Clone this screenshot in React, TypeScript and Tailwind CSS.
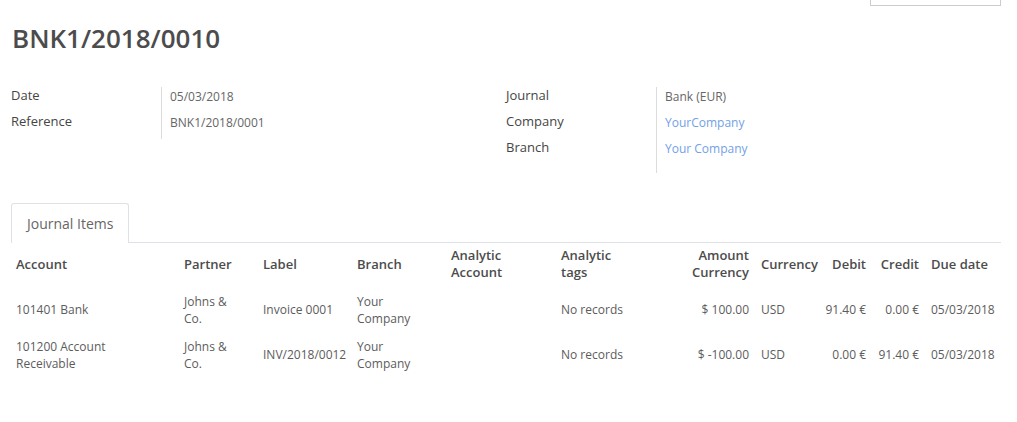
const cols =
  "grid grid-cols-[168px_79px_94px_94px_110px_100px_98px_65px_52px_53px_77px]";

type Row = {
  account: string[];
  partner: string[];
  label: string[];
  branch: string[];
  tags: string;
  amount: string;
  currency: string;
  debit: string;
  credit: string;
  due: string;
};

const rows: Row[] = [
  {
    account: ["101401 Bank"],
    partner: ["Johns &", "Co."],
    label: ["Invoice 0001"],
    branch: ["Your", "Company"],
    tags: "No records",
    amount: "$ 100.00",
    currency: "USD",
    debit: "91.40 €",
    credit: "0.00 €",
    due: "05/03/2018",
  },
  {
    account: ["101200 Account", "Receivable"],
    partner: ["Johns &", "Co."],
    label: ["INV/2018/0012"],
    branch: ["Your", "Company"],
    tags: "No records",
    amount: "$ -100.00",
    currency: "USD",
    debit: "0.00 €",
    credit: "91.40 €",
    due: "05/03/2018",
  },
];

const Lines = ({ lines }: { lines: string[] }) => (
  <div>
    {lines.map((l) => (
      <div key={l} className="whitespace-nowrap">
        {l}
      </div>
    ))}
  </div>
);

const Field = ({ label, value, link }: { label: string; value: string; link?: boolean }) => (
  <div className="flex h-[26px]">
    <div className="w-[150px] shrink-0 text-[13px] font-medium leading-[16px] text-[#454545]">
      {label}
    </div>
    <div
      className={
        "border-l border-[#dcdcdc] pl-[8px] text-[12px] leading-[20px] " +
        (link ? "text-[#739fe8]" : "text-[#666666]")
      }
    >
      {value}
    </div>
  </div>
);

export default function App() {
  return (
    <div
      className="min-h-screen bg-white pl-[11px] pr-[16px]"
      style={{ fontFamily: '"Open Sans", "Noto Sans", sans-serif' }}
    >
      <div className="flex justify-end">
        <div className="h-[6px] w-[131px] border-x border-b border-[#cccccc] bg-white" />
      </div>

      <h1 className="mt-[16px] pl-[1px] text-[26px] font-semibold leading-[32px] text-[#4c4c4c]">
        BNK1/2018/0010
      </h1>

      <div className="mt-[33px] grid grid-cols-2">
        <div className="flex flex-col">
          <Field label="Date" value="05/03/2018" />
          <Field label="Reference" value="BNK1/2018/0001" />
        </div>
        <div className="flex flex-col">
          <Field label="Journal" value="Bank (EUR)" />
          <Field label="Company" value="YourCompany" link />
          <Field label="Branch" value="Your Company" link />
          <div className="flex h-[8px]">
            <div className="w-[150px] shrink-0" />
            <div className="border-l border-[#dcdcdc]" />
          </div>
        </div>
      </div>

      <div className="mt-[30px] flex border-b border-[#dee2e6]">
        <div className="-mb-px flex h-[40px] items-center rounded-t-[3px] border-x border-t border-[#dee2e6] bg-white px-[15px] text-[14px] text-[#666666]">
          Journal Items
        </div>
      </div>

      <div className={cols + " h-[42px] items-center text-[13px] font-semibold leading-[17px] text-[#4c4c4c]"}>
        <div className="px-[5px]">Account</div>
        <div className="px-[5px]">Partner</div>
        <div className="px-[5px]">Label</div>
        <div className="px-[5px]">Branch</div>
        <div className="px-[5px]">
          <Lines lines={["Analytic", "Account"]} />
        </div>
        <div className="px-[5px]">
          <Lines lines={["Analytic", "tags"]} />
        </div>
        <div className="px-[5px] text-right">
          <Lines lines={["Amount", "Currency"]} />
        </div>
        <div className="pl-[7px]">Currency</div>
        <div className="px-[5px] text-right">Debit</div>
        <div className="px-[5px] text-right">Credit</div>
        <div className="pl-[7px]">Due date</div>
      </div>

      <div className="mt-[2px]">
        {rows.map((r, i) => (
          <div key={i} className={cols + " h-[45px] items-center text-[12px] leading-[17px] text-[#5c5c5c]"}>
            <div className="px-[5px]">
              <Lines lines={r.account} />
            </div>
            <div className="px-[5px]">
              <Lines lines={r.partner} />
            </div>
            <div className="px-[5px]">
              <Lines lines={r.label} />
            </div>
            <div className="px-[5px]">
              <Lines lines={r.branch} />
            </div>
            <div className="px-[5px]" />
            <div className="px-[5px]">{r.tags}</div>
            <div className="px-[5px] text-right whitespace-nowrap">{r.amount}</div>
            <div className="pl-[7px]">{r.currency}</div>
            <div className="px-[5px] text-right whitespace-nowrap">{r.debit}</div>
            <div className="px-[5px] text-right whitespace-nowrap">{r.credit}</div>
            <div className="pl-[7px] whitespace-nowrap">{r.due}</div>
          </div>
        ))}
      </div>
    </div>
  );
}
